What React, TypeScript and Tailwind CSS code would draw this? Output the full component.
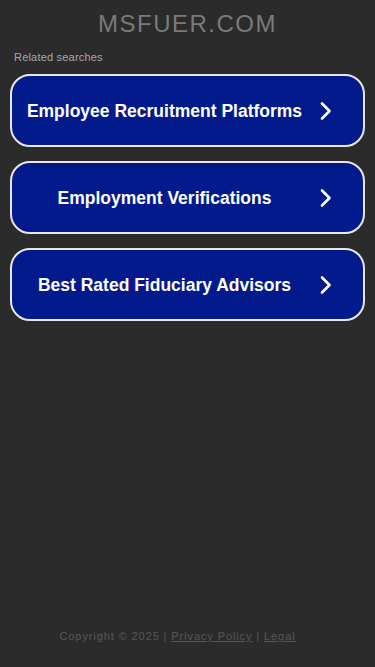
const searches = [
  'Employee Recruitment Platforms',
  'Employment Verifications',
  'Best Rated Fiduciary Advisors',
];

function Chevron() {
  return (
    <svg width="14" height="20" viewBox="0 0 14 20" fill="none" className="shrink-0">
      <path d="M3 2.5 L10.5 10 L3 17.5" stroke="white" strokeWidth="2.6" strokeLinecap="round" strokeLinejoin="round" />
    </svg>
  );
}

export default function App() {
  return (
    <div
      className="min-h-screen bg-[#2b2b2b] flex flex-col"
      style={{ fontFamily: '"Liberation Sans", Arial, sans-serif' }}
    >
      <header className="pt-[10px] text-center">
        <h1 className="text-[24px] leading-[28px] tracking-[1.5px] text-[#7a7a7a]">MSFUER.COM</h1>
      </header>

      <div className="px-[10px] pt-[12px]">
        <p className="pl-[4px] text-[11px] leading-[14px] tracking-[0.2px] text-[#a8a8a8]">Related searches</p>
        <div className="mt-[10px] flex flex-col gap-[14px]">
          {searches.map((s) => (
            <a
              key={s}
              href="#"
              className="flex h-[73px] items-center rounded-[20px] border-2 border-[#e8e8e8] bg-[#021a8c] pl-[2px] pr-[30px]"
            >
              <span className="flex-1 pr-[4px] text-center text-[17.5px] font-bold leading-[20px] text-white">{s}</span>
              <Chevron />
            </a>
          ))}
        </div>
      </div>

      <footer className="mt-auto pb-[24px] pr-[20px] text-center text-[11px] leading-[14px] tracking-[0.9px] text-[#585858]">
        Copyright © 2025 | <a href="#" className="underline">Privacy Policy</a> | <a href="#" className="underline">Legal</a>
      </footer>
    </div>
  );
}
